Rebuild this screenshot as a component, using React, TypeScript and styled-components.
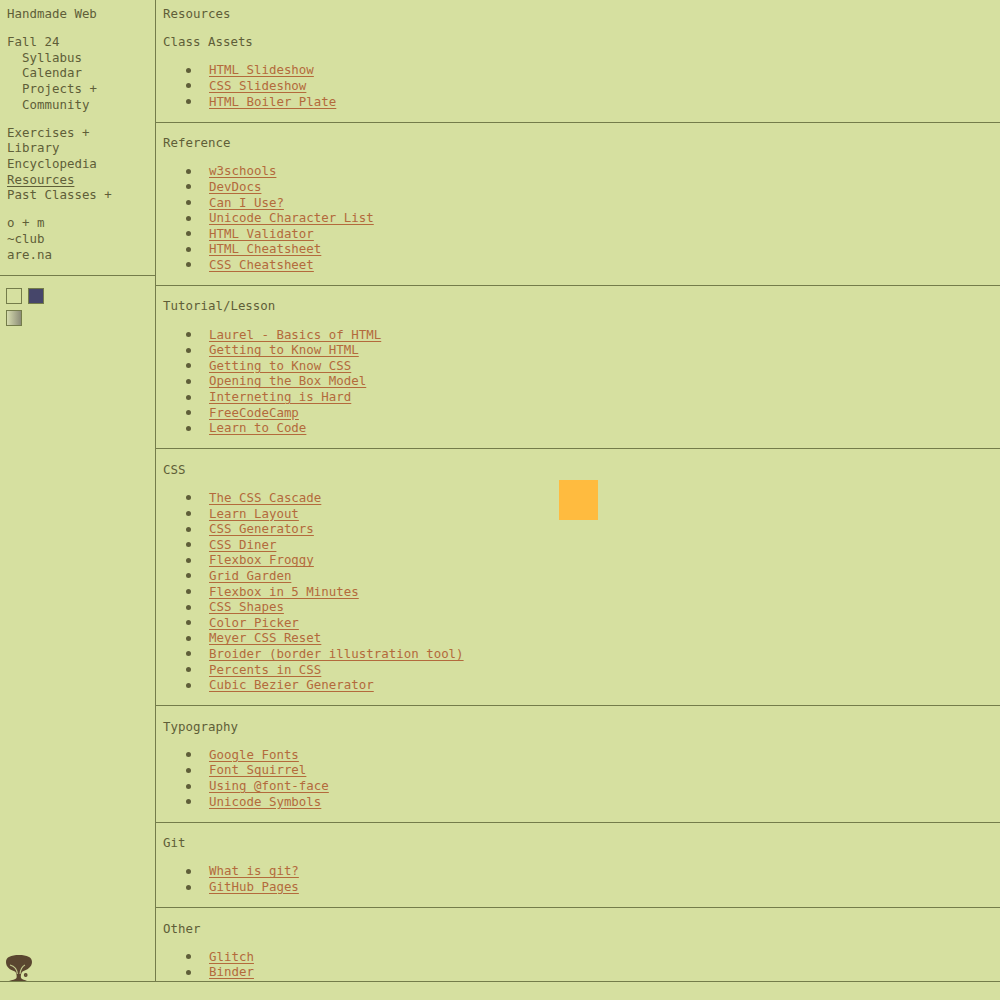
import React from 'react';
import styled, { createGlobalStyle } from 'styled-components';

const Global = createGlobalStyle`
    html, body {
        margin: 0;
        height: 1000px;
        overflow: hidden;
        background: #d6e0a0;
    }
    body {
        font-family: "DejaVu Sans Mono", monospace;
        font-size: 12.45px;
        line-height: 15.6px;
        color: #5f5e38;
    }
`;

const Page = styled.div`
    display: flex;
    height: 982px;
    border-bottom: 1px solid #747c4a;
    box-sizing: border-box;
    overflow: hidden;
`;

const Sidebar = styled.nav`
    display: flex;
    flex-direction: column;
    flex: 0 0 156px;
    box-sizing: border-box;
    border-right: 1px solid #747c4a;
`;

const NavTop = styled.div`
    padding: 6px 7px 13px;
    border-bottom: 1px solid #747c4a;
`;

const NavGroup = styled.div`
    margin-bottom: 12.6px;
    &:last-child { margin-bottom: 0; }
`;

const NavItem = styled.div<{ $indent?: boolean; $active?: boolean }>`
    padding-left: ${p => (p.$indent ? '15px' : '0')};
    text-decoration: ${p => (p.$active ? 'underline' : 'none')};
    text-underline-offset: 2px;
    white-space: pre;
`;

const Swatches = styled.div`
    display: flex;
    flex-wrap: wrap;
    gap: 6px;
    width: 44px;
    padding: 12px 0 0 6px;
`;

const Swatch = styled.div<{ $fill: string }>`
    width: 16px;
    height: 16px;
    box-sizing: border-box;
    border: 1px solid #747c4a;
    background: ${p => p.$fill};
`;

const TreeMark = styled.svg`
    display: block;
    margin: auto 0 0 6px;
    width: 26px;
    height: 26px;
`;

const Main = styled.main`
    flex: 1;
    min-width: 0;
    overflow: hidden;
`;

const Section = styled.section`
    padding: 12.4px 7px 12.6px;
    border-bottom: 1px solid #747c4a;
    &:first-child { padding-top: 6px; }
    &:last-child { border-bottom: none; }
`;

const Heading = styled.div`
    margin-bottom: 12.6px;
`;

const LinkList = styled.ul`
    margin: 0;
    padding: 0 0 0 46px;
    list-style: none;
`;

const LinkItem = styled.li`
    position: relative;
    &::before {
        content: "";
        position: absolute;
        left: -23px;
        top: 5.5px;
        width: 5px;
        height: 5px;
        border-radius: 50%;
        background: #5f5e38;
    }
`;

const ResourceLink = styled.a`
    color: #b36a3c;
    text-decoration: underline;
    text-underline-offset: 2px;
`;

const Floater = styled.div`
    position: absolute;
    left: 559px;
    top: 480px;
    width: 39px;
    height: 40px;
    background: #ffbb3f;
`;

const sections: { groups: { heading: string; links: string[] }[] }[] = [
    { groups: [
        { heading: 'Resources', links: [] },
        { heading: 'Class Assets', links: ['HTML Slideshow', 'CSS Slideshow', 'HTML Boiler Plate'] },
    ] },
    { groups: [{ heading: 'Reference', links: ['w3schools', 'DevDocs', 'Can I Use?', 'Unicode Character List', 'HTML Validator', 'HTML Cheatsheet', 'CSS Cheatsheet'] }] },
    { groups: [{ heading: 'Tutorial/Lesson', links: ['Laurel - Basics of HTML', 'Getting to Know HTML', 'Getting to Know CSS', 'Opening the Box Model', 'Interneting is Hard', 'FreeCodeCamp', 'Learn to Code'] }] },
    { groups: [{ heading: 'CSS', links: ['The CSS Cascade', 'Learn Layout', 'CSS Generators', 'CSS Diner', 'Flexbox Froggy', 'Grid Garden', 'Flexbox in 5 Minutes', 'CSS Shapes', 'Color Picker', 'Meyer CSS Reset', 'Broider (border illustration tool)', 'Percents in CSS', 'Cubic Bezier Generator'] }] },
    { groups: [{ heading: 'Typography', links: ['Google Fonts', 'Font Squirrel', 'Using @font-face', 'Unicode Symbols'] }] },
    { groups: [{ heading: 'Git', links: ['What is git?', 'GitHub Pages'] }] },
    { groups: [{ heading: 'Other', links: ['Glitch', 'Binder'] }] },
];

export default function App()
{
    return (
        <>
            <Global />
            <Page>
                <Sidebar>
                    <NavTop>
                        <NavGroup><NavItem>Handmade Web</NavItem></NavGroup>
                        <NavGroup>
                            <NavItem>Fall 24</NavItem>
                            <NavItem $indent>Syllabus</NavItem>
                            <NavItem $indent>Calendar</NavItem>
                            <NavItem $indent>Projects +</NavItem>
                            <NavItem $indent>Community</NavItem>
                        </NavGroup>
                        <NavGroup>
                            <NavItem>Exercises +</NavItem>
                            <NavItem>Library</NavItem>
                            <NavItem>Encyclopedia</NavItem>
                            <NavItem $active>Resources</NavItem>
                            <NavItem>Past Classes +</NavItem>
                        </NavGroup>
                        <NavGroup>
                            <NavItem>o + m</NavItem>
                            <NavItem>~club</NavItem>
                            <NavItem>are.na</NavItem>
                        </NavGroup>
                    </NavTop>
                    <Swatches>
                        <Swatch $fill="#d6e0a0" />
                        <Swatch $fill="#46466a" />
                        <Swatch $fill="linear-gradient(90deg, #d6dcae, #8c8c78)" />
                    </Swatches>
                    <TreeMark viewBox="0 0 26 26">
                        <path fill="#5a4630" d="M0 7 C0 2 5 0 13 0 C21 0 26 2 26 7 C26 12 21 15 16.5 16.5 C15 18 14.5 21 15 23 C16 24.5 19 25 21 26 L3 26 C6 25 9.5 24.5 10.5 23 C11 21 10.5 18 9 16.5 C4 15 0 12 0 7 Z" />
                        <path fill="none" stroke="#c3c98e" strokeWidth="1.1" d="M11.3 19 C11 14 8 11 4 10 M14 19 C14.5 14 16 11.5 19 10" />
                        <circle cx="19.7" cy="20" r="1.9" fill="#5a4630" />
                        <circle cx="19.7" cy="20" r="0.6" fill="#8a8a50" />
                    </TreeMark>
                </Sidebar>
                <Main>
                    {sections.map(section => (
                        <Section key={section.groups[0].heading}>
                            {section.groups.map(group => (
                                <React.Fragment key={group.heading}>
                                    <Heading>{group.heading}</Heading>
                                    {group.links.length > 0 && (
                                        <LinkList>
                                            {group.links.map(link => (
                                                <LinkItem key={link}><ResourceLink href="#">{link}</ResourceLink></LinkItem>
                                            ))}
                                        </LinkList>
                                    )}
                                </React.Fragment>
                            ))}
                        </Section>
                    ))}
                </Main>
            </Page>
            <Floater />
        </>
    );
}
